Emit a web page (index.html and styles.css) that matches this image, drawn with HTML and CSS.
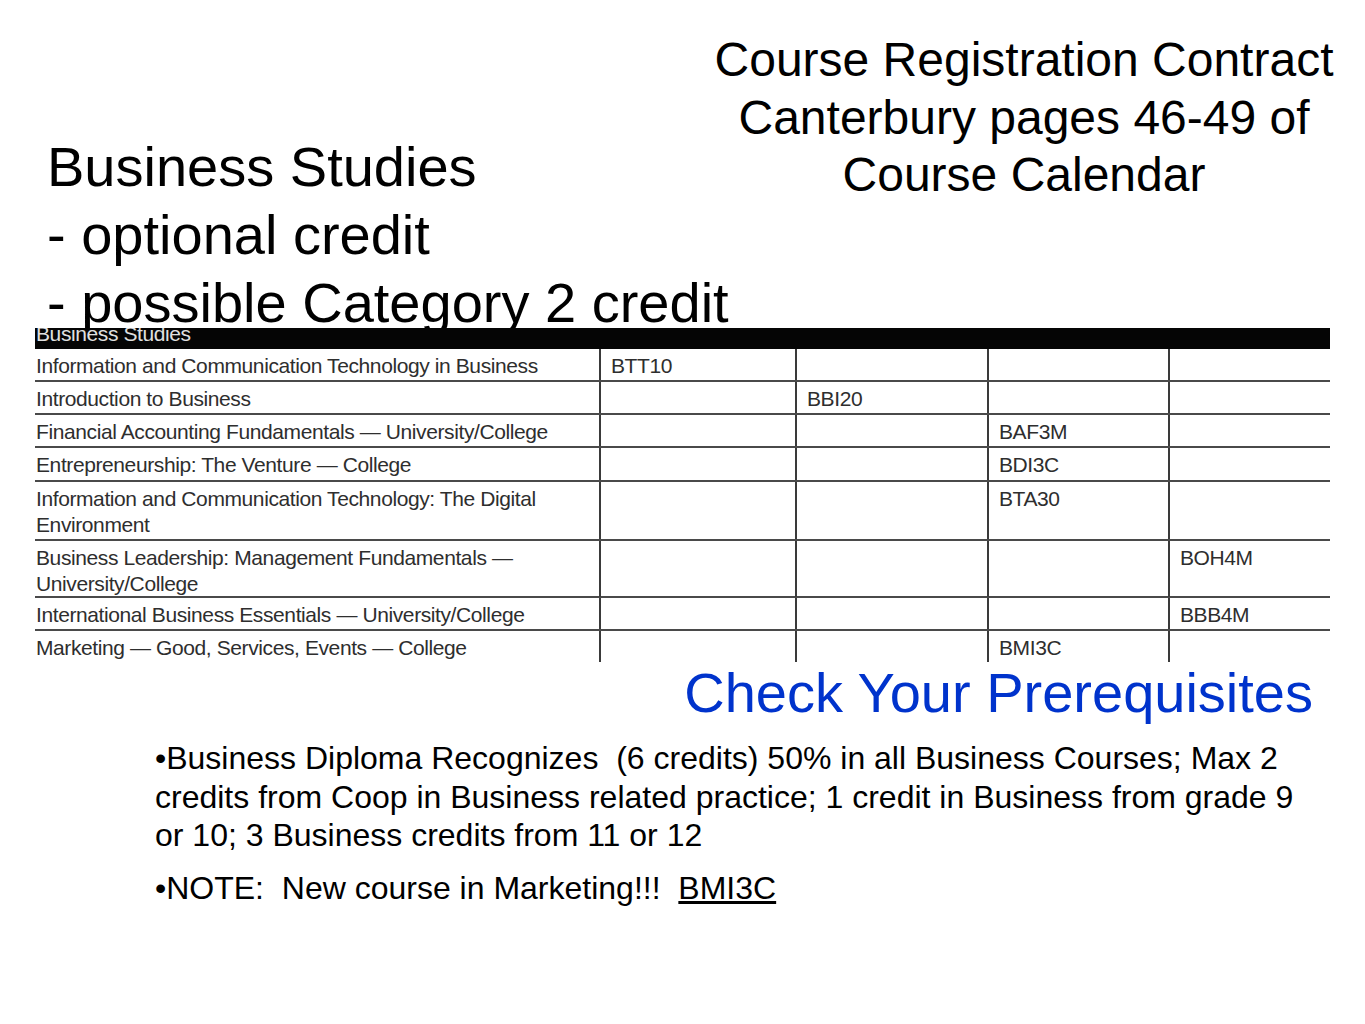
FILE: index.html
```html
<!DOCTYPE html>
<html lang="en">
<head>
<meta charset="utf-8">
<title>Business Studies</title>
<link rel="stylesheet" href="styles.css">
</head>
<body>
<div class="slide">
  <div class="top">
    <h1 class="heading">Business Studies<br>- optional credit<br>- possible Category 2 credit</h1>
    <h2 class="title">Course Registration Contract<br>Canterbury pages 46-49 of<br>Course Calendar</h2>
  </div>

  <div class="table">
    <div class="thead"><span>Business Studies</span></div>
    <div class="row">
      <div class="cell first">Information and Communication Technology in Business</div>
      <div class="cell">BTT10</div><div class="cell"></div><div class="cell"></div><div class="cell"></div>
    </div>
    <div class="row">
      <div class="cell first">Introduction to Business</div>
      <div class="cell"></div><div class="cell">BBI20</div><div class="cell"></div><div class="cell"></div>
    </div>
    <div class="row">
      <div class="cell first">Financial Accounting Fundamentals — University/College</div>
      <div class="cell"></div><div class="cell"></div><div class="cell">BAF3M</div><div class="cell"></div>
    </div>
    <div class="row r34">
      <div class="cell first">Entrepreneurship: The Venture — College</div>
      <div class="cell"></div><div class="cell"></div><div class="cell">BDI3C</div><div class="cell"></div>
    </div>
    <div class="row r59">
      <div class="cell first">Information and Communication Technology: The Digital Environment</div>
      <div class="cell"></div><div class="cell"></div><div class="cell">BTA30</div><div class="cell"></div>
    </div>
    <div class="row r57">
      <div class="cell first">Business Leadership: Management Fundamentals — University/College</div>
      <div class="cell"></div><div class="cell"></div><div class="cell"></div><div class="cell">BOH4M</div>
    </div>
    <div class="row">
      <div class="cell first">International Business Essentials — University/College</div>
      <div class="cell"></div><div class="cell"></div><div class="cell"></div><div class="cell">BBB4M</div>
    </div>
    <div class="row last">
      <div class="cell first">Marketing — Good, Services, Events — College</div>
      <div class="cell"></div><div class="cell"></div><div class="cell">BMI3C</div><div class="cell"></div>
    </div>
  </div>

  <div class="check">Check Your Prerequisites</div>

  <div class="notes">
    <p class="note">•Business Diploma Recognizes&nbsp; (6 credits) 50% in all Business Courses; Max 2 credits from Coop in Business related practice; 1 credit in Business from grade 9 or 10; 3 Business credits from 11 or 12</p>
    <p class="note">•NOTE:&nbsp; New course in Marketing!!!&nbsp; <u>BMI3C</u></p>
  </div>
</div>
</body>
</html>
```

FILE: styles.css
```css
html, body {
  margin: 0;
  padding: 0;
  background: #ffffff;
}

.slide {
  width: 1365px;
  height: 1024px;
  overflow: hidden;
  font-family: "Liberation Sans", Arial, sans-serif;
  color: #000;
}

.top {
  display: grid;
  grid-template-columns: minmax(0, 1fr) 648px;
  padding: 0 17px 0 47px;
  align-items: start;
}

.heading {
  margin: 0;
  padding-top: 133px;
  font-size: 56px;
  line-height: 68px;
  font-weight: normal;
  white-space: nowrap;
}

.title {
  margin: 0;
  padding-top: 31px;
  font-size: 48px;
  line-height: 57.5px;
  font-weight: normal;
  text-align: center;
  white-space: nowrap;
}

.table {
  position: relative;
  z-index: 1;
  margin: -9px 0 0 35px;
  width: 1295px;
  background: #fff;
  font-size: 21px;
  letter-spacing: -0.4px;
  color: #2e2e2e;
}

.thead {
  height: 21px;
  background: #050505;
  color: #e0e0e0;
  overflow: hidden;
  line-height: 11.5px;
  padding-left: 1px;
}

.row {
  display: grid;
  grid-template-columns: 564px 196px 192px 181px 162px;
  height: 33px;
  box-sizing: border-box;
  border-bottom: 2px solid #4a4a4a;
}

.row.r34 { height: 34px; }
.row.r59 { height: 59px; }
.row.r57 { height: 57px; }
.row.last { height: 31px; border-bottom: none; }

.cell {
  border-left: 2px solid #3a3a3a;
  padding: 4px 4px 0 10px;
  line-height: 26px;
}

.cell.first {
  border-left: none;
  padding-left: 1px;
  padding-right: 0;
}

.check {
  margin-top: 3px;
  padding-right: 52px;
  text-align: right;
  font-size: 56px;
  line-height: 56px;
  color: #0033cc;
}

.notes {
  margin: 18px 0 0 155px;
  width: 1150px;
  font-size: 32px;
  line-height: 38.5px;
}

.note {
  margin: 0 0 14px 0;
  text-align: left;
}
```
